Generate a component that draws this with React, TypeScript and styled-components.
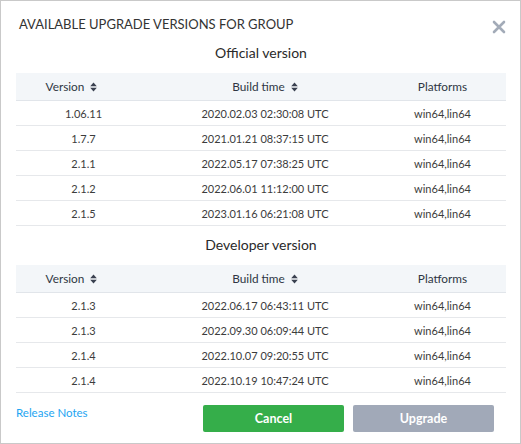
import React from 'react';
import styled, { createGlobalStyle } from 'styled-components';

const GlobalStyle = createGlobalStyle`
    html, body {
        margin: 0;
        padding: 0;
        background: #ffffff;
    }
    body {
        font-family: Lato, "Liberation Sans", sans-serif;
        color: #333333;
    }
`;

const Dialog = styled.div`
    box-sizing: border-box;
    width: 521px;
    height: 444px;
    border: 1px solid #c9c9c9;
    background: #fff;
    padding: 0 14px 10px 15px;
    display: flex;
    flex-direction: column;
`;

const Header = styled.div`
    display: flex;
    align-items: flex-start;
    justify-content: space-between;
    padding-top: 14px;
`;

const Title = styled.h1`
    margin: 0 0 0 3px;
    font-size: 13px;
    font-weight: 400;
    line-height: 18px;
    color: #333;
    text-transform: uppercase;
`;

const CloseButton = styled.button`
    border: none;
    background: none;
    padding: 0;
    margin: 5px 0 0 0;
    width: 14px;
    height: 14px;
    cursor: pointer;
    display: flex;
`;

const SectionTitle = styled.h2`
    margin: 9px 0 10px;
    font-size: 14px;
    font-weight: 400;
    line-height: 20px;
    text-align: center;
    color: #2a2a2a;
`;

const Table = styled.div`
    display: grid;
    grid-template-columns: 135px 228px 1fr;
`;

const HeadCell = styled.div<{ $shift?: number }>`
    height: 27px;
    background: #f3f6f9;
    border-bottom: 1px solid #e1e5ea;
    display: flex;
    align-items: center;
    justify-content: center;
    gap: 6px;
    padding-right: ${(p) => p.$shift ?? 0}px;
    font-size: 11.8px;
    font-weight: 400;
    color: #2f3644;
`;

const Cell = styled.div`
    height: 24px;
    border-bottom: 1px solid #e6e8eb;
    display: flex;
    align-items: center;
    justify-content: center;
    font-size: 11px;
    color: #3c3c3c;
`;

const Footer = styled.div`
    margin-top: 12px;
    display: flex;
    align-items: flex-start;
`;

const Link = styled.a`
    font-size: 11.5px;
    line-height: 16px;
    color: #1ea5f2;
    text-decoration: none;
    cursor: pointer;
`;

const Buttons = styled.div`
    margin-left: auto;
    margin-right: 12px;
    display: flex;
    gap: 9px;
`;

const Button = styled.button<{ $variant: 'ok' | 'off' }>`
    width: 141px;
    height: 27px;
    border: none;
    border-radius: 2px;
    font-family: Lato, "Liberation Sans", sans-serif;
    font-size: 12.5px;
    font-weight: 700;
    color: #fff;
    background: ${(p) => (p.$variant === 'ok' ? '#35ae4a' : '#a1a9b8')};
    cursor: ${(p) => (p.$variant === 'ok' ? 'pointer' : 'default')};
`;

const SortIcon = () => (
    <svg width="7" height="10" viewBox="0 0 7 10">
        <path d="M3.5 0.5 L6.8 4.2 H0.2 Z M3.5 9.5 L6.8 5.8 H0.2 Z" fill="#3a4150" />
    </svg>
);

const CloseIcon = () => (
    <svg width="14" height="14" viewBox="0 0 14 14">
        <path d="M2 2 L12 12 M12 2 L2 12" stroke="#a3abb8" strokeWidth="2.6" strokeLinecap="round" />
    </svg>
);

type Version = { version: string; time: string; platforms: string };

const official: Version[] = [
    { version: '1.06.11', time: '2020.02.03 02:30:08 UTC', platforms: 'win64,lin64' },
    { version: '1.7.7', time: '2021.01.21 08:37:15 UTC', platforms: 'win64,lin64' },
    { version: '2.1.1', time: '2022.05.17 07:38:25 UTC', platforms: 'win64,lin64' },
    { version: '2.1.2', time: '2022.06.01 11:12:00 UTC', platforms: 'win64,lin64' },
    { version: '2.1.5', time: '2023.01.16 06:21:08 UTC', platforms: 'win64,lin64' },
];

const developer: Version[] = [
    { version: '2.1.3', time: '2022.06.17 06:43:11 UTC', platforms: 'win64,lin64' },
    { version: '2.1.3', time: '2022.09.30 06:09:44 UTC', platforms: 'win64,lin64' },
    { version: '2.1.4', time: '2022.10.07 09:20:55 UTC', platforms: 'win64,lin64' },
    { version: '2.1.4', time: '2022.10.19 10:47:24 UTC', platforms: 'win64,lin64' },
];

const VersionTable: React.FC<{ rows: Version[] }> = ({ rows }) => (
    <Table>
        <HeadCell $shift={24}>
            Version <SortIcon />
        </HeadCell>
        <HeadCell>
            Build time <SortIcon />
        </HeadCell>
        <HeadCell>Platforms</HeadCell>
        {rows.map((r, i) => (
            <React.Fragment key={i}>
                <Cell>{r.version}</Cell>
                <Cell>{r.time}</Cell>
                <Cell>{r.platforms}</Cell>
            </React.Fragment>
        ))}
    </Table>
);

const App: React.FC = () => (
    <>
        <GlobalStyle />
        <Dialog>
            <Header>
                <Title>Available upgrade versions for group</Title>
                <CloseButton aria-label="Close">
                    <CloseIcon />
                </CloseButton>
            </Header>
            <SectionTitle>Official version</SectionTitle>
            <VersionTable rows={official} />
            <SectionTitle>Developer version</SectionTitle>
            <VersionTable rows={developer} />
            <Footer>
                <Link>Release Notes</Link>
                <Buttons>
                    <Button $variant="ok">Cancel</Button>
                    <Button $variant="off" disabled>
                        Upgrade
                    </Button>
                </Buttons>
            </Footer>
        </Dialog>
    </>
);

export default App;
